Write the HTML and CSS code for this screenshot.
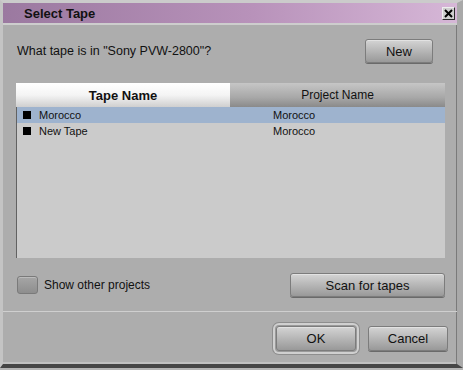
FILE: index.html
```html
<!DOCTYPE html>
<html lang="en">
<head>
    <meta charset="UTF-8">
    <title>Select Tape</title>
    <link rel="stylesheet" href="styles.css">
</head>
<body>
    <div class="dialog">
        <div class="titlebar">
            <span class="title">Select Tape</span>
            <button class="close">
                <svg width="9" height="9" viewBox="0 0 9 9"><path d="M1 1L8 8M8 1L1 8" stroke="#000" stroke-width="2"/></svg>
            </button>
        </div>

        <div class="main">
            <div class="top-row">
                <span class="question">What tape is in "Sony PVW-2800"?</span>
                <button class="btn btn-new">New</button>
            </div>

            <div class="list">
                <div class="list-head">
                    <div class="col-head sorted">Tape Name</div>
                    <div class="col-head">Project Name</div>
                </div>
                <div class="list-body">
                    <div class="row selected">
                        <span class="name"><i class="mark"></i>Morocco</span>
                        <span>Morocco</span>
                    </div>
                    <div class="row">
                        <span class="name"><i class="mark"></i>New Tape</span>
                        <span>Morocco</span>
                    </div>
                </div>
            </div>

            <div class="bottom-row">
                <label class="check"><span class="box"></span>Show other projects</label>
                <button class="btn btn-scan">Scan for tapes</button>
            </div>
        </div>

        <div class="sep"></div>

        <div class="footer">
            <button class="btn btn-ok">OK</button>
            <button class="btn">Cancel</button>
        </div>
    </div>
</body>
</html>
```

FILE: styles.css
```css
/* Page */
html {
  background: #b4b4b4;
}

body {
  margin: 0;
  font-family: "Liberation Sans", Arial, sans-serif;
  color: #111;
}

/* Dialog frame */
.dialog {
  width: 463px;
  height: 368px;
  box-sizing: border-box;
  display: flex;
  flex-direction: column;
  background: #adadad;
  border-top: 3px solid #cbcbcb;
  border-left: 3px solid #c4c4c4;
  border-right: 6px solid #a9a9a9;
  border-bottom: 4px solid #454545;
  box-shadow: inset -1px 0 0 #7a7a7a, inset 0 -2px 0 #c0c0c0;
}

/* Title bar */
.titlebar {
  height: 20px;
  display: flex;
  align-items: center;
  justify-content: space-between;
  padding-left: 21px;
  padding-right: 2px;
  background: linear-gradient(to right, #9b79a0, #b892ba 55%, #d6b7d7);
  border-bottom: 2px solid #cdcdcd;
}

.title {
  font-size: 13px;
  font-weight: 700;
}

.close {
  width: 13px;
  height: 13px;
  padding: 0;
  display: flex;
  align-items: center;
  justify-content: center;
  background: #cfcfcf;
  border: 1px solid;
  border-color: #eeeeee #2a2a2a #2a2a2a #eeeeee;
}

/* Main area */
.main {
  padding: 0 12px 0 13px;
}

.top-row {
  margin-top: 14px;
  height: 24px;
  display: flex;
  align-items: center;
  justify-content: space-between;
  padding-left: 1px;
  margin-right: 12px;
}

.question {
  font-size: 12.5px;
}

/* Buttons */
.btn {
  height: 25px;
  padding: 0;
  font-family: "Liberation Sans", Arial, sans-serif;
  font-size: 13px;
  color: #111;
  border: 1px solid #7c7c7c;
  border-radius: 3px;
  background: linear-gradient(#d4d4d4, #b6b6b6 50%, #999999);
  box-shadow: inset 0 1px 0 #e2e2e2, 0 1px 0 #6a6a6a;
  width: 80px;
}

.btn-new {
  width: 68px;
  height: 24px;
}

.btn-scan {
  width: 155px;
  height: 24px;
}

.btn-ok {
  box-shadow: inset 0 1px 0 #e2e2e2, 0 0 0 1px #9a9a9a, 0 0 0 3px #d0d0d0, 0 0 0 4px #8e8e8e;
}

/* Tape list */
.list {
  margin-top: 20px;
}

.list-head {
  display: flex;
  height: 24px;
  box-shadow: 0 1px 0 #5e5e5e;
}

.col-head {
  flex: 1;
  display: flex;
  align-items: center;
  justify-content: center;
  font-size: 12px;
  background: linear-gradient(#c6c6c6, #a8a8a8 60%, #8a8a8a);
}

.col-head.sorted {
  flex: 0 0 214px;
  font-size: 13px;
  font-weight: 700;
  background: linear-gradient(#ffffff, #f4f4f4 50%, #cfcfcf);
}

.list-body {
  height: 151px;
  background: #cbcbcb;
  border-left: 1px solid #626262;
  box-sizing: border-box;
}

.row {
  display: grid;
  grid-template-columns: 256px 1fr;
  height: 16px;
  align-items: center;
  font-size: 11px;
}

.row.selected {
  background: #9eb3ce;
}

.name {
  display: flex;
  align-items: center;
}

.mark {
  width: 8px;
  height: 8px;
  background: #000;
  margin: 0 8px 0 6px;
}

/* Bottom controls */
.bottom-row {
  margin-top: 15px;
  height: 24px;
  display: flex;
  align-items: center;
  justify-content: space-between;
  padding-left: 1px;
}

.check {
  display: flex;
  align-items: center;
  font-size: 12px;
}

.box {
  width: 19px;
  height: 16px;
  margin-right: 6px;
  border: 1px solid #7a7a7a;
  border-radius: 3px;
  background: linear-gradient(#a6a6a6, #8e8e8e);
  box-shadow: inset 0 1px 0 #bcbcbc;
}

.sep {
  margin-top: 14px;
  height: 1px;
  background: #cfcfcf;
}

.footer {
  margin-top: 14px;
  display: flex;
  justify-content: flex-end;
  gap: 12px;
  padding-right: 9px;
}
```
